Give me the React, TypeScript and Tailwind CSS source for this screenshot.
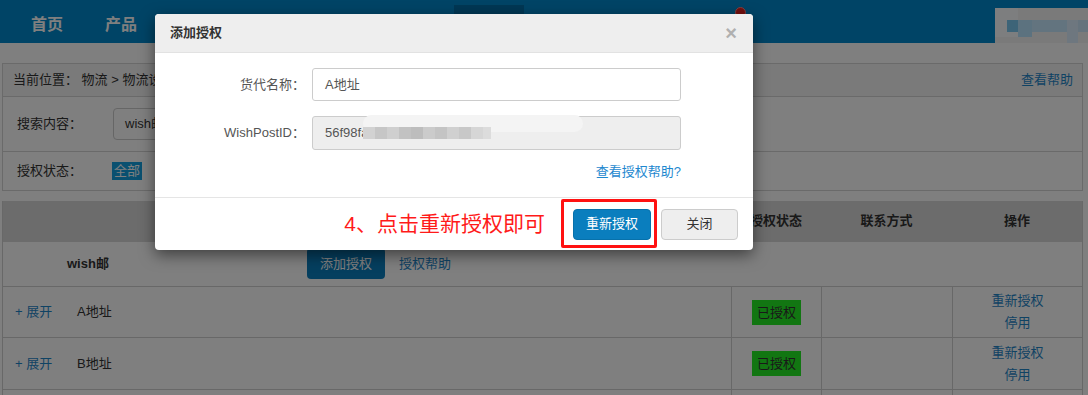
import React from "react";

const navItems = ["首页", "产品", "订单", "刊登", "采购", "仓库"];

function DataRow({ name, h }: { name: string; h: string }) {
  return (
    <div className={`flex border-t border-[#d0d0d0] ${h}`}>
      <div className="flex flex-1 items-center pl-[12px]">
        <span className="w-[62px] text-[#1f86c9]">+ 展开</span>
        <span>{name}</span>
      </div>
      <div className="flex w-[90px] items-center justify-center border-l border-[#d0d0d0]">
        <span className="h-[25px] bg-[#24ec24] px-[5px] leading-[25px] text-[#333]">已授权</span>
      </div>
      <div className="w-[131px] border-l border-[#d0d0d0]" />
      <div className="flex w-[130px] flex-col items-center justify-center border-l border-[#d0d0d0] leading-[22px] text-[#1f86c9]">
        <span>重新授权</span>
        <span>停用</span>
      </div>
    </div>
  );
}

export default function App() {
  return (
    <div className="relative h-[395px] w-[1088px] overflow-hidden bg-white font-['Liberation_Sans','Noto_Sans_CJK_SC',sans-serif] text-[13px] text-[#333]">
      {/* Header */}
      <header className="flex h-[43px] bg-[#0088cc] pl-[10px]">
        {navItems.map((n) => (
          <div
            key={n}
            className="flex w-[74px] items-center justify-center pt-[7px] text-[16px] font-bold text-white"
          >
            {n}
          </div>
        ))}
        <div className="mt-[5px] flex w-[70px] items-center justify-center pt-[2px] text-[16px] font-bold text-white bg-[#006ea8]">
          物流
        </div>
        <div className="flex w-[74px] items-center justify-center pt-[7px] text-[16px] font-bold text-white">
          客服
        </div>
        <div className="relative ml-auto mt-[8px] h-[35px] w-[93px] bg-[#f4f4f4]">
          <div className="absolute left-[0px] top-[0px] h-[29px] w-[23px] bg-[#fafdff]" />
          <div className="absolute left-[12px] top-[12px] h-[12px] w-[11px] bg-[#7ac8f0]" />
          <div className="absolute left-[23px] top-[12px] h-[17px] w-[14px] bg-[#b8e4ff]" />
          <div className="absolute left-[37px] top-[12px] h-[12px] w-[35px] bg-[#c6e8ff]" />
          <div className="absolute left-[72px] top-[12px] h-[23px] w-[11px] bg-[#dcefff]" />
          <div className="absolute left-[83px] top-[12px] h-[12px] w-[10px] bg-[#cce6fa]" />
        </div>
      </header>
      <span className="absolute left-[735px] top-[7px] h-[11px] w-[11px] rounded-full border border-[#ff8080] bg-[#e41f1f]" />

      {/* Search panel */}
      <div className="ml-[2px] mt-[20px] w-[1081px] border border-[#d4d4d4]">
        <div className="flex h-[32px] items-center justify-between bg-[#f5f5f5] pl-[10px] pr-[9px]">
          <span>当前位置： 物流 &gt; 物流设置 &gt; 物流账号授权</span>
          <span className="text-[#1f86c9]">查看帮助</span>
        </div>
        <div className="flex h-[55px] items-center border-t border-[#d4d4d4] pl-[14px]">
          <span className="w-[96px]">搜索内容：</span>
          <div className="flex h-[32px] w-[260px] items-center rounded-[4px] border border-[#ccc] pl-[11px]">
            wish邮
          </div>
        </div>
        <div className="flex h-[39px] items-center border-t border-[#d4d4d4] pl-[14px]">
          <span className="w-[95px]">授权状态：</span>
          <span className="h-[18px] bg-[#14a0e0] px-[2px] leading-[18px] text-white">全部</span>
          <span className="ml-[14px]">已授权</span>
          <span className="ml-[14px]">未授权</span>
        </div>
      </div>

      {/* Table */}
      <div className="ml-[2px] mt-[10px] w-[1081px] border-x border-[#d0d0d0]">
        <div className="flex h-[41px] items-center bg-[#d8d8d8] pb-[1px] font-bold">
          <div className="flex-1 text-center">货代名称</div>
          <div className="w-[90px] text-center">授权状态</div>
          <div className="w-[131px] text-center">联系方式</div>
          <div className="w-[130px] text-center">操作</div>
        </div>
        <div className="flex h-[44px] items-center pb-[1px]">
          <div className="w-[304px] pl-[64px] font-bold">wish邮</div>
          <div className="flex h-[31px] w-[78px] items-center justify-center rounded-[4px] bg-[#0a7ebe] text-white">
            添加授权
          </div>
          <span className="ml-[14px] text-[#1f86c9]">授权帮助</span>
        </div>
        <DataRow name="A地址" h="h-[51px]" />
        <DataRow name="B地址" h="h-[52px]" />
        <DataRow name="C地址" h="h-[52px]" />
      </div>

      {/* Backdrop */}
      <div className="absolute inset-0 bg-black/50" />

      {/* Modal */}
      <div className="absolute left-[155px] top-[14px] w-[598px] overflow-hidden rounded-[4px] bg-white shadow-[0_5px_15px_rgba(0,0,0,0.5)]">
        <div className="flex h-[39px] items-center justify-between border-b border-[#e2e2e2] bg-[#eeeeee] pl-[15px] pr-[16px]">
          <span className="font-bold text-[#333]">添加授权</span>
          <span className="text-[20px] font-bold leading-none text-[#b0b0b0]">×</span>
        </div>
        <div className="h-[144px] pt-[15px]">
          <div className="flex items-center">
            <span className="w-[150px] text-right text-[#555]">货代名称：</span>
            <div className="ml-[7px] flex h-[33px] w-[369px] items-center rounded-[3px] border border-[#ccc] pl-[12px] text-[#555]">
              A地址
            </div>
          </div>
          <div className="mt-[15px] flex items-center">
            <span className="w-[150px] text-right text-[#555]">WishPostID：</span>
            <div className="relative ml-[7px] flex h-[34px] w-[369px] items-center rounded-[3px] border border-[#ccc] bg-[#eeeeee] pl-[12px] text-[#555]">
              56f98fa
              <div className="absolute left-[50px] top-[-2px] h-[17px] w-[220px] rounded-full bg-[#f4f4f4]" />
              <div className="absolute left-[50px] top-[10px] flex h-[12px]">
                <div className="w-[12px] bg-[#d2d2d2]" />
                <div className="w-[12px] bg-[#c6c6c6]" />
                <div className="w-[12px] bg-[#cfcfcf]" />
                <div className="w-[12px] bg-[#c2c2c2]" />
                <div className="w-[12px] bg-[#bdbdbd]" />
                <div className="w-[12px] bg-[#cbcbcb]" />
                <div className="w-[12px] bg-[#c4c4c4]" />
                <div className="w-[12px] bg-[#d0d0d0]" />
                <div className="w-[12px] bg-[#c8c8c8]" />
                <div className="w-[12px] bg-[#d6d6d6]" />
                <div className="w-[8px] bg-[#dcdcdc]" />
              </div>
            </div>
          </div>
          <div className="mt-[12px] flex h-[20px] items-center justify-end pr-[72px] text-[#1e88cf]">
            查看授权帮助?
          </div>
        </div>
        <div className="flex h-[53px] items-center justify-end border-t border-[#e5e5e5] pr-[15px]">
          <span className="mr-[28px] pb-[2px] text-[21px] leading-none text-[#ff1a1a]">4、点击重新授权即可</span>
          <div className="relative">
            <div className="flex h-[31px] w-[78px] items-center justify-center rounded-[4px] border border-[#0771ab] bg-[#0a7ebe] text-white">
              重新授权
            </div>
            <div className="absolute left-[-12px] top-[-10px] h-[49px] w-[96px] rounded-[2px] border-[3px] border-[#ff1111]" />
          </div>
          <div className="ml-[10px] flex h-[31px] w-[77px] items-center justify-center rounded-[4px] border border-[#ccc] bg-[#eeeeee] text-[#333]">
            关闭
          </div>
        </div>
      </div>
    </div>
  );
}
